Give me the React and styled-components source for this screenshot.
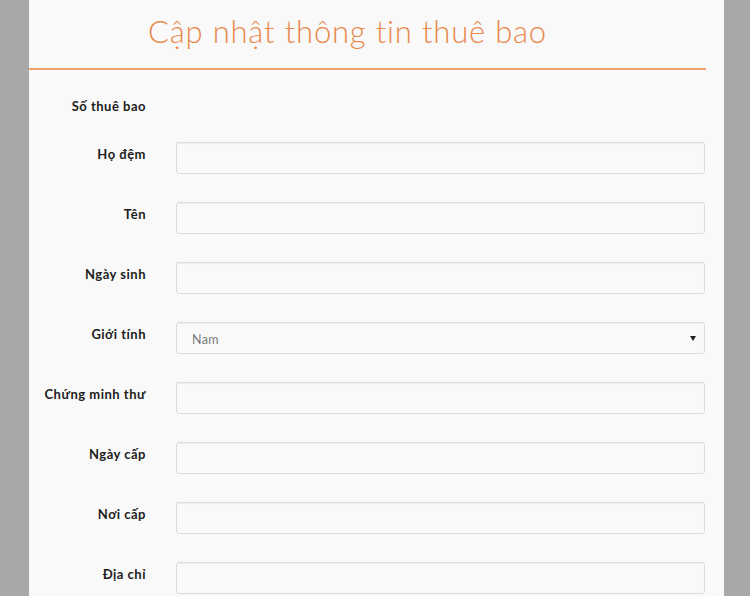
import React from "react";
import styled, { createGlobalStyle } from "styled-components";

const Global = createGlobalStyle`
  html, body { margin: 0; padding: 0; height: 100%; }
  body { background: #a8a8a8; font-family: Lato, "Noto Sans", sans-serif; overflow: hidden; }
  #root { height: 100%; }
`;

const Page = styled.div`
  height: 596px;
  display: flex;
`;

const Panel = styled.div`
  margin-left: 29px;
  width: 695px;
  height: 100%;
  background: #f9f9f9;
  display: flex;
  flex-direction: column;
`;

const Header = styled.div`
  margin-right: 18px;
  border-bottom: 2px solid #eda06c;
  height: 70px;
  box-sizing: border-box;
  padding: 11px 0 0 119px;
`;

const Title = styled.h1`
  margin: 0;
  font-family: Lato, "Noto Sans", sans-serif;
  font-weight: 300;
  font-size: 31px;
  line-height: 40px;
  color: #e8884b;
  letter-spacing: 0.8px;
`;

const Form = styled.div`
  display: grid;
  grid-template-columns: 117px 529px;
  column-gap: 30px;
  row-gap: 28px;
  padding-top: 23px;
  align-items: start;
`;

const Label = styled.div`
  text-align: right;
  font-family: Lato, "Noto Sans", sans-serif;
  font-weight: 700;
  font-size: 13px;
  letter-spacing: 0.5px;
  color: #1d1d1d;
  padding-top: ${(p) => p.$top ?? 4}px;
  line-height: 16px;
  white-space: nowrap;
`;

const Spacer = styled.div`
  height: 21px;
`;

const Input = styled.div`
  height: 32px;
  box-sizing: border-box;
  border: 1px solid #dcdcdc;
  border-radius: 3px;
  background: #f9f9f9;
  box-shadow: inset 0 1px 1px rgba(0,0,0,0.04);
  display: flex;
  align-items: center;
  justify-content: space-between;
  padding: 0 8px 0 15px;
`;

const SelectText = styled.span`
  font-family: Lato, "Noto Sans", sans-serif;
  font-size: 12.5px;
  letter-spacing: 0.3px;
  color: #7a7a7a;
  padding-top: 3px;
`;

const Arrow = styled.span`
  width: 0;
  height: 0;
  border-left: 3px solid transparent;
  border-right: 3px solid transparent;
  border-top: 5px solid #222;
`;

const fields = ["Họ đệm", "Tên", "Ngày sinh", "Giới tính", "Chứng minh thư", "Ngày cấp", "Nơi cấp", "Địa chỉ"];

export default function App() {
  return (
    <>
      <Global />
      <Page>
        <Panel>
          <Header>
            <Title>Cập nhật thông tin thuê bao</Title>
          </Header>
          <Form>
            <Label $top={5}>Số thuê bao</Label>
            <Spacer />
            {fields.map((f) => (
              <React.Fragment key={f}>
                <Label>{f}</Label>
                {f === "Giới tính" ? (
                  <Input>
                    <SelectText>Nam</SelectText>
                    <Arrow />
                  </Input>
                ) : (
                  <Input />
                )}
              </React.Fragment>
            ))}
          </Form>
        </Panel>
      </Page>
    </>
  );
}
